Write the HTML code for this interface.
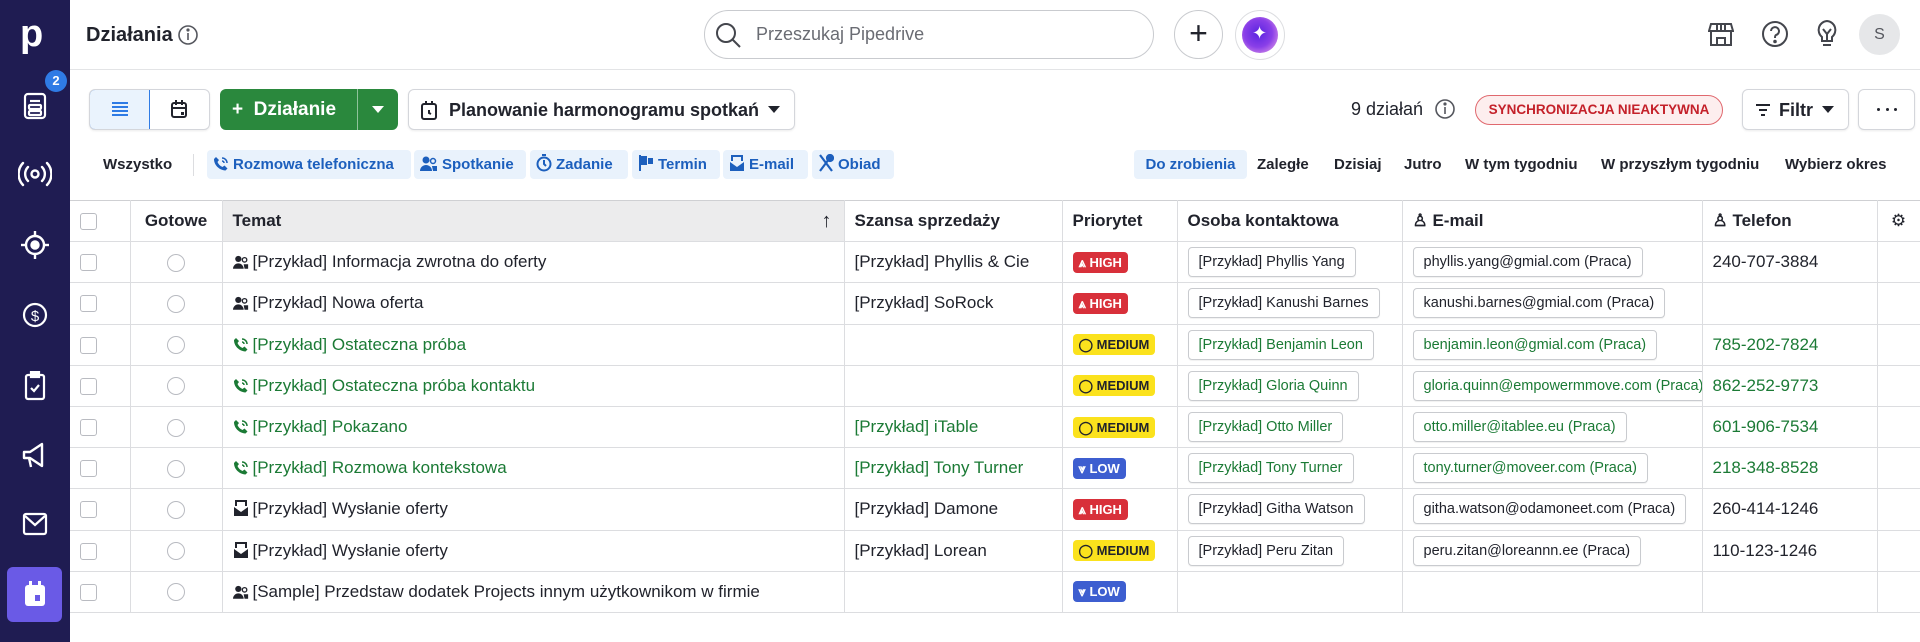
<!DOCTYPE html>
<html><head><meta charset="utf-8"><style>
*{box-sizing:border-box;margin:0;padding:0}
body{width:1920px;height:642px;overflow:hidden;background:#fff;font-family:"Liberation Sans",sans-serif;color:#21232c;position:relative}
.sb{position:absolute;left:0;top:0;width:70px;height:642px;background:#1f1c52}
.ab{position:absolute}
.ic{position:absolute;left:23px}
.btn{position:absolute;border:1px solid #d4d6db;border-radius:6px;background:#fff;height:41px;top:89px;box-shadow:0 1px 2px rgba(0,0,0,.08)}
.chip{position:absolute;top:150px;height:29px;background:#e9f2fc;border-radius:4px;color:#1c5fbd;font-size:15px;font-weight:bold;line-height:29px;padding-left:6px;white-space:nowrap}
.chip svg{vertical-align:-3px;margin-right:4px}
.per{position:absolute;top:150px;height:29px;line-height:29px;font-size:15px;font-weight:bold;color:#21232c}
table{position:absolute;left:70px;top:200px;border-collapse:collapse;table-layout:fixed;width:1850px}
td,th{border:1px solid #dcdde0;height:41.2px;font-size:17px;white-space:nowrap;overflow:hidden;padding:0 10px;text-align:left;font-weight:normal;vertical-align:middle}
th{font-weight:bold;border-top:1px solid #cfd0d3;position:relative}
tr td:first-child,tr th:first-child{border-left:none}
.cb{display:inline-block;width:17px;height:17px;border:1.5px solid #b9bbc1;border-radius:3px;vertical-align:middle}
.rd{display:inline-block;width:18px;height:18px;border:1.5px solid #b9bbc1;border-radius:50%;vertical-align:middle}
.g{color:#1b7a35}
.pb{display:inline-block;height:21px;line-height:21px;border-radius:4px;font-size:13px;font-weight:bold;padding:0 6px;vertical-align:middle}
.hi{background:#d8303a;color:#fff}.me{background:#fbe21d;color:#21232c}.lo{background:#3d5ed0;color:#fff}
.bx{display:inline-block;border:1px solid #c9cbcf;border-radius:4px;font-size:14.5px;height:30px;line-height:28px;padding:0 10px;vertical-align:middle;box-shadow:0 1px 1px rgba(0,0,0,.06)}
.ti svg{vertical-align:-3px;margin-right:4px}
</style></head><body>
<div class="sb">
 <div class="ab" style="left:20px;top:14px;color:#fff;font-size:38px;font-weight:bold;line-height:40px">p</div>
 <svg class="ic" style="top:92px" width="24" height="28" viewBox="0 0 24 28" fill="none" stroke="#fff" stroke-width="2.2"><rect x="2" y="2" width="20" height="24" rx="3"/><line x1="7" y1="9" x2="17" y2="9"/><rect x="6" y="13" width="12" height="4" rx="1"/><rect x="6" y="19" width="12" height="4" rx="1"/></svg>
 <div class="ab" style="left:45px;top:70px;width:22px;height:22px;border-radius:50%;background:#2f7be5;color:#fff;font-size:13px;font-weight:bold;text-align:center;line-height:22px">2</div>
 <svg class="ic" style="left:18px;top:160px" width="34" height="28" viewBox="0 0 34 28" fill="none" stroke="#fff" stroke-width="2.4" stroke-linecap="round"><circle cx="17" cy="14" r="3.5"/><path d="M10 7a10 10 0 0 0 0 14M24 7a10 10 0 0 1 0 14M5 3a16 16 0 0 0 0 22M29 3a16 16 0 0 1 0 22"/></svg>
 <svg class="ic" style="left:21px;top:230px" width="28" height="30" viewBox="0 0 28 30" fill="none" stroke="#fff" stroke-width="2.4"><circle cx="14" cy="15" r="9"/><circle cx="14" cy="15" r="3.5" fill="#fff"/><line x1="14" y1="1" x2="14" y2="6"/><line x1="14" y1="24" x2="14" y2="29"/><line x1="0" y1="15" x2="5" y2="15"/><line x1="23" y1="15" x2="28" y2="15"/></svg>
 <svg class="ic" style="left:22px;top:301px" width="26" height="28" viewBox="0 0 26 28" fill="none" stroke="#fff" stroke-width="2.2"><circle cx="13" cy="14" r="11"/><text x="13" y="20" fill="#fff" stroke="none" font-size="15" text-anchor="middle" font-family="Liberation Sans">$</text></svg>
 <svg class="ic" style="left:24px;top:371px" width="22" height="30" viewBox="0 0 22 30" fill="none" stroke="#fff" stroke-width="2.2"><rect x="2" y="4" width="18" height="24" rx="2"/><rect x="7" y="1" width="8" height="5" fill="#fff"/><path d="M7 17l3 3 5-6"/></svg>
 <svg class="ic" style="left:21px;top:441px" width="28" height="30" viewBox="0 0 28 30" fill="none" stroke="#fff" stroke-width="2.4" stroke-linejoin="round"><path d="M3 11h6l12-8v22l-12-8H3z"/><path d="M8 17l2 9"/></svg>
 <svg class="ic" style="left:22px;top:512px" width="26" height="24" viewBox="0 0 26 24" fill="none" stroke="#fff" stroke-width="2.2"><rect x="2" y="2" width="22" height="20" rx="2"/><path d="M3 4l10 9 10-9"/></svg>
 <div class="ab" style="left:7px;top:567px;width:55px;height:55px;border-radius:6px;background:#6a5ae6"></div>
 <svg class="ic" style="left:23px;top:580px" width="24" height="28" viewBox="0 0 24 28"><rect x="2" y="5" width="20" height="21" rx="3" fill="#fff"/><rect x="6" y="1" width="3" height="6" fill="#fff"/><rect x="15" y="1" width="3" height="6" fill="#fff"/><rect x="12" y="15" width="5" height="6" fill="#6a5ae6"/></svg>
</div>

<div class="ab" style="left:70px;top:69px;width:1850px;height:1px;background:#e3e4e6"></div>
<div class="ab" style="left:86px;top:22px;font-size:20px;font-weight:bold;line-height:26px">Działania</div>
<svg class="ab" style="left:177px;top:24px" width="22" height="22" viewBox="0 0 22 22" fill="none" stroke="#55575e" stroke-width="1.6"><circle cx="11" cy="11" r="9"/><line x1="11" y1="9" x2="11" y2="16"/><circle cx="11" cy="6" r=".8" fill="#55575e"/></svg>
<div class="ab" style="left:704px;top:10px;width:450px;height:49px;border:1px solid #c9cbcf;border-radius:25px"></div>
<svg class="ab" style="left:714px;top:21px" width="28" height="28" viewBox="0 0 28 28" fill="none" stroke="#44464d" stroke-width="2"><circle cx="12" cy="12" r="9"/><line x1="18.5" y1="18.5" x2="26" y2="26"/></svg>
<div class="ab" style="left:756px;top:24px;font-size:18px;color:#6a6c73">Przeszukaj Pipedrive</div>
<div class="ab" style="left:1174px;top:10px;width:49px;height:49px;border:1px solid #c9cbcf;border-radius:50%;text-align:center;line-height:44px;font-size:32px;color:#21232c;font-weight:300">+</div>
<div class="ab" style="left:1235px;top:10px;width:50px;height:50px;border:1px solid #dcdde0;border-radius:50%"></div>
<div class="ab" style="left:1242px;top:17px;width:36px;height:36px;border-radius:50%;background:radial-gradient(circle at 45% 45%,#5a24e0 0,#8a3fe8 50%,#f7b0e8 100%)"></div>
<div class="ab" style="left:1252px;top:23px;color:#fff;font-size:18px">✦</div>
<svg class="ab" style="left:1708px;top:20px" width="26" height="28" viewBox="0 0 26 28" fill="none" stroke="#44464d" stroke-width="2"><path d="M3 4h20l2 7H1z"/><path d="M3 11v14h20V11"/><path d="M9 4v7M17 4v7M13 4v7"/><rect x="9" y="18" width="8" height="7"/></svg>
<svg class="ab" style="left:1761px;top:20px" width="28" height="28" viewBox="0 0 28 28" fill="none" stroke="#44464d" stroke-width="2"><circle cx="14" cy="14" r="12"/><path d="M10 11a4 4 0 1 1 5 4c-1 .5-1 1.5-1 3"/><circle cx="14" cy="21.5" r=".8" fill="#44464d"/></svg>
<svg class="ab" style="left:1816px;top:19px" width="22" height="30" viewBox="0 0 22 30" fill="none" stroke="#44464d" stroke-width="2"><path d="M11 2a9 9 0 0 0-5 16v4h10v-4a9 9 0 0 0-5-16z"/><path d="M7 26h8M7 10l4 5 4-5M11 15v7"/></svg>
<div class="ab" style="left:1859px;top:14px;width:41px;height:41px;border-radius:50%;background:#e6e7e9;text-align:center;line-height:41px;font-size:16px;color:#55575e">S</div>

<div class="btn" style="left:89px;width:121px;overflow:hidden"><div style="position:absolute;left:-1px;top:-1px;width:61px;height:41px;background:#eaf3fd;border:1px solid #2f7be5;border-radius:6px 0 0 6px"></div></div>
<svg class="ab" style="left:111px;top:101px" width="18" height="16" viewBox="0 0 18 16" stroke="#2f7be5" stroke-width="2"><path d="M1 2h16M1 6h16M1 10h16M1 14h16"/></svg>
<svg class="ab" style="left:169px;top:99px" width="20" height="20" viewBox="0 0 20 20" fill="none" stroke="#21232c" stroke-width="2"><rect x="3" y="4" width="14" height="14" rx="2"/><path d="M7 1v5M13 1v5M3 9h14"/><rect x="12" y="13" width="3" height="3" fill="#21232c" stroke="none"/></svg>
<div class="ab" style="left:220px;top:89px;width:178px;height:41px;background:#2a883d;border-radius:6px"></div>
<div class="ab" style="left:357px;top:89px;width:1px;height:41px;background:#8fc39b"></div>
<div class="ab" style="left:232px;top:98px;color:#fff;font-size:19px;font-weight:bold;line-height:24px">+&nbsp; Działanie</div>
<div class="ab" style="left:372px;top:106px;width:0;height:0;border-left:6px solid transparent;border-right:6px solid transparent;border-top:7px solid #fff"></div>
<div class="btn" style="left:408px;width:387px"></div>
<svg class="ab" style="left:420px;top:100px" width="18" height="20" viewBox="0 0 18 20" fill="none" stroke="#21232c" stroke-width="2"><rect x="2" y="4" width="14" height="15" rx="2"/><path d="M6 1v4M12 1v4M9 10v3l2 1"/></svg>
<div class="ab" style="left:449px;top:99px;font-size:18px;font-weight:bold;line-height:22px">Planowanie harmonogramu spotkań</div>
<div class="ab" style="left:768px;top:106px;border-left:6px solid transparent;border-right:6px solid transparent;border-top:7px solid #21232c"></div>

<div class="ab" style="left:1351px;top:98px;font-size:18px;line-height:22px">9 działań</div>
<svg class="ab" style="left:1434px;top:98px" width="22" height="22" viewBox="0 0 22 22" fill="none" stroke="#55575e" stroke-width="1.6"><circle cx="11" cy="11" r="9"/><line x1="11" y1="9" x2="11" y2="16"/><circle cx="11" cy="6" r=".8" fill="#55575e"/></svg>
<div class="ab" style="left:1475px;top:95px;width:248px;height:30px;border:1px solid #e0686e;background:#fdeeee;border-radius:15px;color:#c4212a;font-size:13.5px;font-weight:bold;text-align:center;line-height:28px">SYNCHRONIZACJA NIEAKTYWNA</div>
<div class="btn" style="left:1742px;width:107px"></div>
<svg class="ab" style="left:1755px;top:104px" width="16" height="12" viewBox="0 0 16 12" stroke="#21232c" stroke-width="2"><path d="M1 1h14M4 6h8M6 11h4"/></svg>
<div class="ab" style="left:1779px;top:99px;font-size:18px;font-weight:bold;line-height:22px">Filtr</div>
<div class="ab" style="left:1822px;top:106px;border-left:6px solid transparent;border-right:6px solid transparent;border-top:7px solid #21232c"></div>
<div class="btn" style="left:1858px;width:57px"></div>
<div class="ab" style="left:1877px;top:108px;width:20px;height:4px;display:flex;justify-content:space-between"><i style="width:3px;height:3px;background:#21232c;border-radius:50%"></i><i style="width:3px;height:3px;background:#21232c;border-radius:50%"></i><i style="width:3px;height:3px;background:#21232c;border-radius:50%"></i></div>

<div class="per" style="left:103px">Wszystko</div>
<div class="ab" style="left:193px;top:154px;width:1px;height:22px;background:#dcdde0"></div>
<div class="chip" style="left:207px;width:204px"><svg width="16" height="16" viewBox="0 0 16 16" fill="#1c5fbd"><path d="M3 1l3 3-1.5 2a9 9 0 0 0 5 5l2-1.5 3 3-2 2C6 14 1 9 1 3z"/><path d="M9 2a5 5 0 0 1 5 5M9 5a2 2 0 0 1 2 2" stroke="#1c5fbd" fill="none" stroke-width="1.5"/></svg>Rozmowa telefoniczna</div>
<div class="chip" style="left:414px;width:112px"><svg width="18" height="16" viewBox="0 0 18 16" fill="#1c5fbd"><circle cx="6" cy="4" r="3.5"/><path d="M0 15a6 6 0 0 1 12 0z"/><circle cx="13" cy="5" r="2.5" fill="none" stroke="#1c5fbd" stroke-width="1.5"/><path d="M12 10h5v5h-4z"/></svg>Spotkanie</div>
<div class="chip" style="left:530px;width:98px"><svg width="16" height="18" viewBox="0 0 16 18" fill="none" stroke="#1c5fbd" stroke-width="2"><circle cx="8" cy="10" r="6.5"/><path d="M8 6v4l2 2M6 1h4"/></svg>Zadanie</div>
<div class="chip" style="left:632px;width:88px"><svg width="16" height="18" viewBox="0 0 16 18" fill="#1c5fbd"><rect x="1" y="1" width="2" height="16"/><path d="M3 2h6v9H3zM10 4h5v6h-5z"/></svg>Termin</div>
<div class="chip" style="left:723px;width:85px"><svg width="16" height="18" viewBox="0 0 16 18" fill="#1c5fbd"><path d="M1 8l7 5 7-5v9H1z"/><path d="M3 7V2h10v5" fill="none" stroke="#1c5fbd" stroke-width="2"/></svg>E-mail</div>
<div class="chip" style="left:812px;width:82px"><svg width="16" height="18" viewBox="0 0 16 18" fill="none" stroke="#1c5fbd" stroke-width="2.2"><path d="M2 1l12 16M14 1L2 17"/><circle cx="12" cy="4" r="3" fill="#1c5fbd"/></svg>Obiad</div>

<div class="per" style="left:1134px;width:113px;background:#e9f2fc;border-radius:4px;color:#1c5fbd;text-align:center">Do zrobienia</div>
<div class="per" style="left:1257px">Zaległe</div>
<div class="per" style="left:1334px">Dzisiaj</div>
<div class="per" style="left:1404px">Jutro</div>
<div class="per" style="left:1465px">W tym tygodniu</div>
<div class="per" style="left:1601px">W przyszłym tygodniu</div>
<div class="per" style="left:1785px">Wybierz okres</div>

<table>
<colgroup><col style="width:60px"><col style="width:92px"><col style="width:622px"><col style="width:218px"><col style="width:115px"><col style="width:225px"><col style="width:300px"><col style="width:175px"><col style="width:43px"></colgroup>
<tr><th><span class="cb"></span></th><th style="text-align:center">Gotowe</th><th style="background:#ececed">Temat<span style="position:absolute;right:12px;top:9px;font-weight:normal;font-size:20px">↑</span></th><th>Szansa sprzedaży</th><th>Priorytet</th><th>Osoba kontaktowa</th><th>♙ E-mail</th><th>♙ Telefon</th><th style="padding:0;text-align:center;font-weight:normal">⚙</th></tr>
<tr><td><span class="cb"></span></td><td style="text-align:center"><span class="rd"></span></td><td class="ti"><svg width="16" height="15" viewBox="0 0 18 16" fill="#21232c"><circle cx="6" cy="4" r="3.5"/><path d="M0 15a6 6 0 0 1 12 0z"/><circle cx="13" cy="5" r="2.5" fill="none" stroke="#21232c" stroke-width="1.5"/><path d="M12 10h5v5h-4z"/></svg>[Przykład] Informacja zwrotna do oferty</td><td>[Przykład] Phyllis &amp; Cie</td><td><span class="pb hi">⩓ HIGH</span></td><td><span class="bx">[Przykład] Phyllis Yang</span></td><td><span class="bx">phyllis.yang@gmial.com (Praca)</span></td><td>240-707-3884</td><td></td></tr>
<tr><td><span class="cb"></span></td><td style="text-align:center"><span class="rd"></span></td><td class="ti"><svg width="16" height="15" viewBox="0 0 18 16" fill="#21232c"><circle cx="6" cy="4" r="3.5"/><path d="M0 15a6 6 0 0 1 12 0z"/><circle cx="13" cy="5" r="2.5" fill="none" stroke="#21232c" stroke-width="1.5"/><path d="M12 10h5v5h-4z"/></svg>[Przykład] Nowa oferta</td><td>[Przykład] SoRock</td><td><span class="pb hi">⩓ HIGH</span></td><td><span class="bx">[Przykład] Kanushi Barnes</span></td><td><span class="bx">kanushi.barnes@gmial.com (Praca)</span></td><td></td><td></td></tr>
<tr class="g"><td><span class="cb"></span></td><td style="text-align:center"><span class="rd"></span></td><td class="ti"><svg width="16" height="16" viewBox="0 0 16 16" fill="#1b7a35"><path d="M3 1l3 3-1.5 2a9 9 0 0 0 5 5l2-1.5 3 3-2 2C6 14 1 9 1 3z"/><path d="M9 2a5 5 0 0 1 5 5M9 5a2 2 0 0 1 2 2" stroke="#1b7a35" fill="none" stroke-width="1.5"/></svg>[Przykład] Ostateczna próba</td><td></td><td><span class="pb me">◯ MEDIUM</span></td><td><span class="bx">[Przykład] Benjamin Leon</span></td><td><span class="bx">benjamin.leon@gmial.com (Praca)</span></td><td>785-202-7824</td><td></td></tr>
<tr class="g"><td><span class="cb"></span></td><td style="text-align:center"><span class="rd"></span></td><td class="ti"><svg width="16" height="16" viewBox="0 0 16 16" fill="#1b7a35"><path d="M3 1l3 3-1.5 2a9 9 0 0 0 5 5l2-1.5 3 3-2 2C6 14 1 9 1 3z"/><path d="M9 2a5 5 0 0 1 5 5M9 5a2 2 0 0 1 2 2" stroke="#1b7a35" fill="none" stroke-width="1.5"/></svg>[Przykład] Ostateczna próba kontaktu</td><td></td><td><span class="pb me">◯ MEDIUM</span></td><td><span class="bx">[Przykład] Gloria Quinn</span></td><td><span class="bx">gloria.quinn@empowermmove.com (Praca)</span></td><td>862-252-9773</td><td></td></tr>
<tr class="g"><td><span class="cb"></span></td><td style="text-align:center"><span class="rd"></span></td><td class="ti"><svg width="16" height="16" viewBox="0 0 16 16" fill="#1b7a35"><path d="M3 1l3 3-1.5 2a9 9 0 0 0 5 5l2-1.5 3 3-2 2C6 14 1 9 1 3z"/><path d="M9 2a5 5 0 0 1 5 5M9 5a2 2 0 0 1 2 2" stroke="#1b7a35" fill="none" stroke-width="1.5"/></svg>[Przykład] Pokazano</td><td>[Przykład] iTable</td><td><span class="pb me">◯ MEDIUM</span></td><td><span class="bx">[Przykład] Otto Miller</span></td><td><span class="bx">otto.miller@itablee.eu (Praca)</span></td><td>601-906-7534</td><td></td></tr>
<tr class="g"><td><span class="cb"></span></td><td style="text-align:center"><span class="rd"></span></td><td class="ti"><svg width="16" height="16" viewBox="0 0 16 16" fill="#1b7a35"><path d="M3 1l3 3-1.5 2a9 9 0 0 0 5 5l2-1.5 3 3-2 2C6 14 1 9 1 3z"/><path d="M9 2a5 5 0 0 1 5 5M9 5a2 2 0 0 1 2 2" stroke="#1b7a35" fill="none" stroke-width="1.5"/></svg>[Przykład] Rozmowa kontekstowa</td><td>[Przykład] Tony Turner</td><td><span class="pb lo">⩔ LOW</span></td><td><span class="bx">[Przykład] Tony Turner</span></td><td><span class="bx">tony.turner@moveer.com (Praca)</span></td><td>218-348-8528</td><td></td></tr>
<tr><td><span class="cb"></span></td><td style="text-align:center"><span class="rd"></span></td><td class="ti"><svg width="16" height="18" viewBox="0 0 16 18" fill="#21232c"><path d="M1 8l7 5 7-5v9H1z"/><path d="M3 7V2h10v5" fill="none" stroke="#21232c" stroke-width="2"/></svg>[Przykład] Wysłanie oferty</td><td>[Przykład] Damone</td><td><span class="pb hi">⩓ HIGH</span></td><td><span class="bx">[Przykład] Githa Watson</span></td><td><span class="bx">githa.watson@odamoneet.com (Praca)</span></td><td>260-414-1246</td><td></td></tr>
<tr><td><span class="cb"></span></td><td style="text-align:center"><span class="rd"></span></td><td class="ti"><svg width="16" height="18" viewBox="0 0 16 18" fill="#21232c"><path d="M1 8l7 5 7-5v9H1z"/><path d="M3 7V2h10v5" fill="none" stroke="#21232c" stroke-width="2"/></svg>[Przykład] Wysłanie oferty</td><td>[Przykład] Lorean</td><td><span class="pb me">◯ MEDIUM</span></td><td><span class="bx">[Przykład] Peru Zitan</span></td><td><span class="bx">peru.zitan@loreannn.ee (Praca)</span></td><td>110-123-1246</td><td></td></tr>
<tr><td><span class="cb"></span></td><td style="text-align:center"><span class="rd"></span></td><td class="ti"><svg width="16" height="15" viewBox="0 0 18 16" fill="#21232c"><circle cx="6" cy="4" r="3.5"/><path d="M0 15a6 6 0 0 1 12 0z"/><circle cx="13" cy="5" r="2.5" fill="none" stroke="#21232c" stroke-width="1.5"/><path d="M12 10h5v5h-4z"/></svg>[Sample] Przedstaw dodatek Projects innym użytkownikom w firmie</td><td></td><td><span class="pb lo">⩔ LOW</span></td><td></td><td></td><td></td><td></td></tr>
</table>
</body></html>
